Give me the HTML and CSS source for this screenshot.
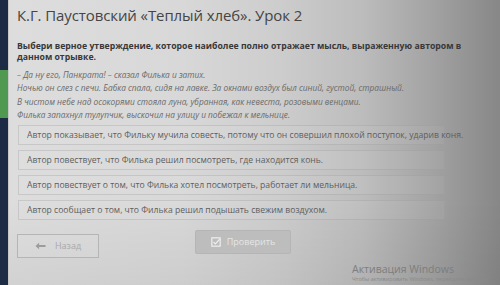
FILE: index.html
```html
<!DOCTYPE html>
<html lang="ru">
<head>
<meta charset="utf-8">
<link rel="stylesheet" href="styles.css">
</head>
<body>
<div class="screen">
  <aside class="rail">
    <div class="rail-gap"></div>
    <div class="rail-active"></div>
  </aside>
  <main class="page">
    <h1 class="title">К.Г. Паустовский «Теплый хлеб». Урок 2</h1>
    <p class="question">Выбери верное утверждение, которое наиболее полно отражает мысль, выраженную автором в данном отрывке.</p>
    <div class="quote">
      <p>– Да ну его, Панкрата! – сказал Филька и затих.</p>
      <p>Ночью он слез с печи. Бабка спала, сидя на лавке. За окнами воздух был синий, густой, страшный.</p>
      <p>В чистом небе над осокорями стояла луна, убранная, как невеста, розовыми венцами.</p>
      <p>Филька запахнул тулупчик, выскочил на улицу и побежал к мельнице.</p>
    </div>
    <div class="answers">
      <div class="answer">Автор показывает, что Фильку мучила совесть, потому что он совершил плохой поступок, ударив коня.</div>
      <div class="answer">Автор повествует, что Филька решил посмотреть, где находится конь.</div>
      <div class="answer">Автор повествует о том, что Филька хотел посмотреть, работает ли мельница.</div>
      <div class="answer">Автор сообщает о том, что Филька решил подышать свежим воздухом.</div>
    </div>
    <div class="actions">
      <button class="btn btn-back"><svg class="arrow" viewBox="0 0 12 8" width="11" height="8"><path d="M0.5 4 L4.5 0.5 L4.5 2.8 L11.5 2.8 L11.5 5.2 L4.5 5.2 L4.5 7.5 Z" fill="#9c9c9c"/></svg>Назад</button>
      <button class="btn btn-check"><svg class="chk" viewBox="0 0 12 12" width="10" height="10"><rect x="1" y="1" width="10" height="10" fill="none" stroke="#f0f0f0" stroke-width="1.4"/><path d="M3 6.2 L5.2 8.3 L10.5 2.5" fill="none" stroke="#f0f0f0" stroke-width="1.5"/></svg>Проверить</button>
    </div>
    <div class="watermark">
      <div class="wm-title">Активация Windows</div>
      <div class="wm-sub">Чтобы активировать Windows, перейдите в раздел</div>
    </div>
  </main>
</div>
</body>
</html>
```
FILE: styles.css
```css
html, body {
  margin: 0;
  padding: 0;
  width: 500px;
  height: 285px;
  overflow: hidden;
}
body {
  font-family: "Open Sans", "Noto Sans", sans-serif;
  background: #1f2e45;
}
.screen {
  display: flex;
  width: 500px;
  height: 285px;
}
.rail {
  width: 8px;
  flex: none;
  background: #1d2c44;
  display: flex;
  flex-direction: column;
}
.rail-gap { height: 70px; }
.rail-active { height: 48px; background: #4f9a50; }
.page {
  flex: 1;
  min-width: 0;
  overflow: hidden;
  display: flex;
  flex-direction: column;
  padding: 0 0 0 8px;
  background:
    linear-gradient(180deg, rgba(0,0,0,0) 70%, rgba(0,0,0,0.05) 100%),
    linear-gradient(90deg, #dddddd 0%, #d8d8d8 35%, #cdcdcd 55%, #bcbcbc 72%, #a3a3a3 86%, #878787 100%);
  border-left: 1px solid #c8c8c8;
}
.title {
  margin: 5px 0 0;
  font-size: 15px;
  font-weight: 400;
  color: #454545;
  line-height: 20px;
  letter-spacing: -0.1px;
}
.question {
  margin: 16px 0 0;
  font-size: 8.7px;
  font-weight: 700;
  color: #383838;
  line-height: 11px;
  width: 445px;
}
.quote {
  margin-top: 5px;
  font-size: 8.3px;
  font-style: italic;
  color: #6a6a6a;
}
.quote p {
  margin: 0;
  line-height: 13.4px;
}
.answers {
  margin-top: 3px;
  display: flex;
  flex-direction: column;
  gap: 5px;
  width: 428px;
}
.answer {
  margin-left: 1px;
  height: 18px;
  padding-left: 8px;
  display: flex;
  align-items: center;
  font-size: 8.6px;
  color: #5e5e5e;
  border: 1px solid rgba(150,150,150,0.3);
  background: rgba(255,255,255,0.05);
  white-space: nowrap;
}
.actions {
  margin-top: 10px;
  display: flex;
  align-items: flex-start;
}
.btn {
  font-family: "Open Sans", "Noto Sans", sans-serif;
  font-size: 9px;
  display: flex;
  align-items: center;
  justify-content: center;
  padding: 0;
}
.btn-back {
  margin-top: 4px;
  margin-left: 0;
  width: 82px;
  height: 24px;
  background: rgba(255,255,255,0.06);
  border: 1px solid #b5b5b5;
  color: #a8a8a8;
  gap: 9px;
}
.btn-check {
  margin-left: 96px;
  width: 96px;
  height: 24px;
  background: #bdbdbd;
  border: 1px solid #b5b5b5;
  border-radius: 2px;
  color: #e6e6e6;
  gap: 6px;
}
.watermark {
  margin-top: 5px;
  margin-left: 335px;
  white-space: nowrap;
}
.wm-title {
  font-size: 10.5px;
  color: #7d7d7d;
  line-height: 13px;
}
.wm-sub {
  font-size: 5.5px;
  color: #8a8a8a;
  line-height: 7px;
}
```
